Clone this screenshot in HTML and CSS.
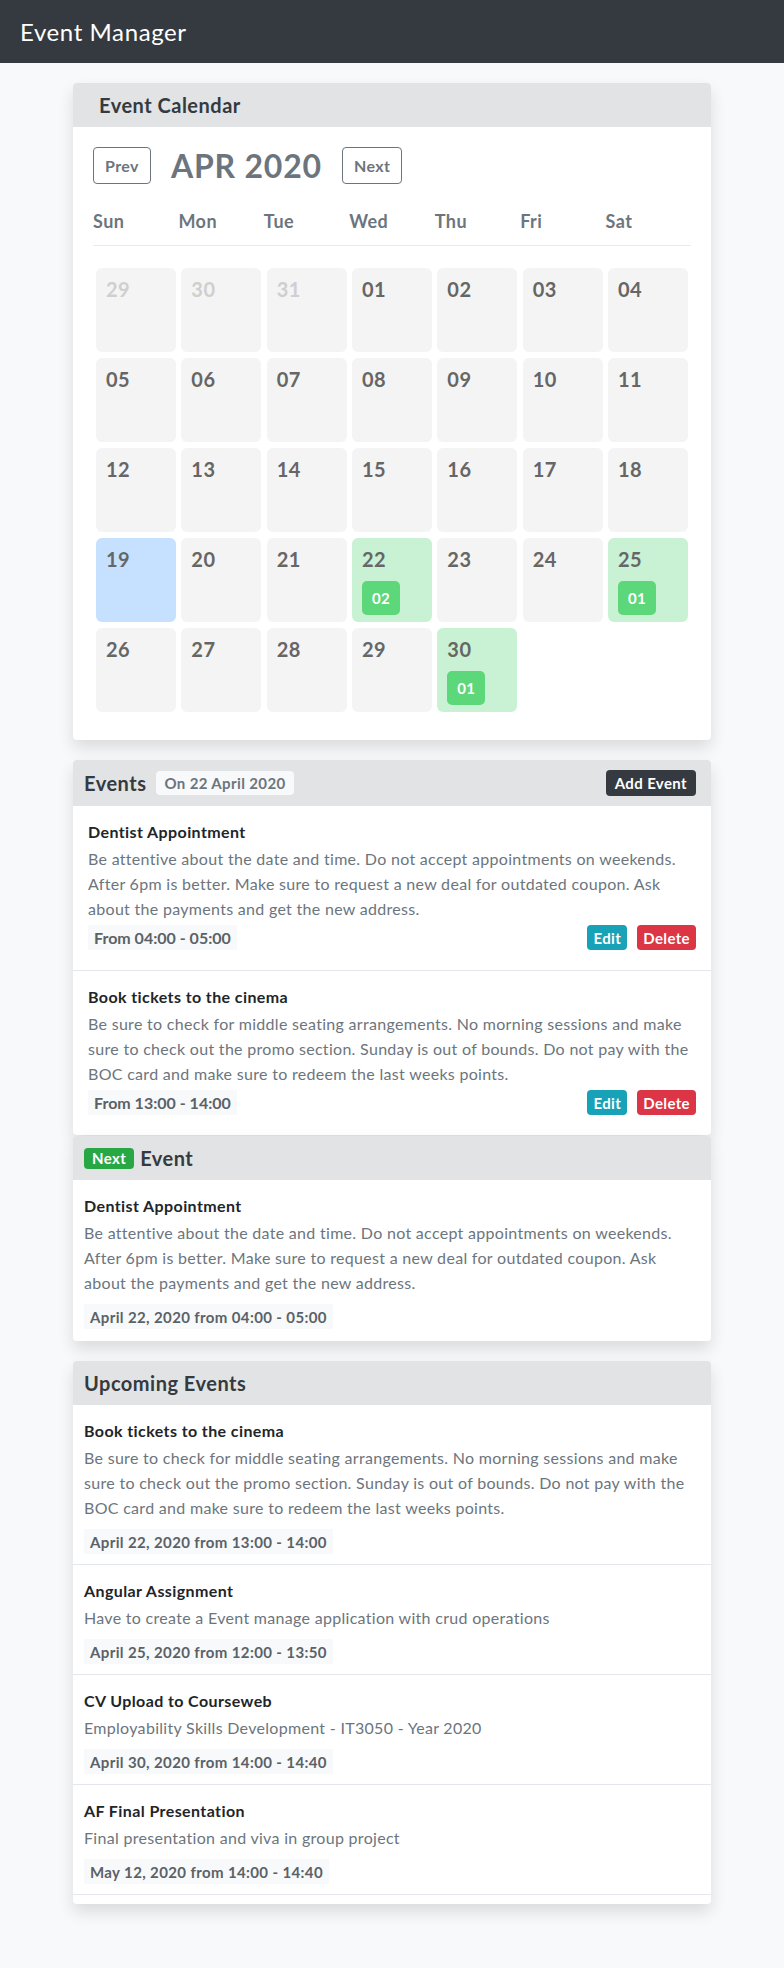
FILE: index.html
```html
<!DOCTYPE html>
<html lang="en">
<head>
<meta charset="utf-8">
<title>Event Manager</title>
<link rel="stylesheet" href="styles.css">
</head>
<body>
<nav class="navbar"><span class="brand">Event Manager</span></nav>
<main class="container">
  <section class="card cal-card">
    <div class="card-header cal-header">Event Calendar</div>
    <div class="cal-body">
      <div class="toolbar">
        <button class="btn-outline">Prev</button>
        <h2 class="month">APR 2020</h2>
        <button class="btn-outline">Next</button>
      </div>
      <div class="weekdays">
        <span>Sun</span><span>Mon</span><span>Tue</span><span>Wed</span><span>Thu</span><span>Fri</span><span>Sat</span>
      </div>
      <div class="grid">
        <div class="cell muted"><span class="num">29</span></div>
        <div class="cell muted"><span class="num">30</span></div>
        <div class="cell muted"><span class="num">31</span></div>
        <div class="cell"><span class="num">01</span></div>
        <div class="cell"><span class="num">02</span></div>
        <div class="cell"><span class="num">03</span></div>
        <div class="cell"><span class="num">04</span></div>
        <div class="cell"><span class="num">05</span></div>
        <div class="cell"><span class="num">06</span></div>
        <div class="cell"><span class="num">07</span></div>
        <div class="cell"><span class="num">08</span></div>
        <div class="cell"><span class="num">09</span></div>
        <div class="cell"><span class="num">10</span></div>
        <div class="cell"><span class="num">11</span></div>
        <div class="cell"><span class="num">12</span></div>
        <div class="cell"><span class="num">13</span></div>
        <div class="cell"><span class="num">14</span></div>
        <div class="cell"><span class="num">15</span></div>
        <div class="cell"><span class="num">16</span></div>
        <div class="cell"><span class="num">17</span></div>
        <div class="cell"><span class="num">18</span></div>
        <div class="cell today"><span class="num">19</span></div>
        <div class="cell"><span class="num">20</span></div>
        <div class="cell"><span class="num">21</span></div>
        <div class="cell has-event"><span class="num">22</span><span class="count">02</span></div>
        <div class="cell"><span class="num">23</span></div>
        <div class="cell"><span class="num">24</span></div>
        <div class="cell has-event"><span class="num">25</span><span class="count">01</span></div>
        <div class="cell"><span class="num">26</span></div>
        <div class="cell"><span class="num">27</span></div>
        <div class="cell"><span class="num">28</span></div>
        <div class="cell"><span class="num">29</span></div>
        <div class="cell has-event"><span class="num">30</span><span class="count">01</span></div>
      </div>
    </div>
  </section>

  <section class="card events-card">
    <div class="card-header events-header">
      <span class="header-title">Events</span>
      <span class="date-badge">On 22 April 2020</span>
      <button class="btn-dark">Add Event</button>
    </div>
    <ul class="list">
      <li class="event-item">
        <h4 class="ev-title">Dentist Appointment</h4>
        <p class="ev-desc">Be attentive about the date and time. Do not accept appointments on weekends. After 6pm is better. Make sure to request a new deal for outdated coupon. Ask about the payments and get the new address.</p>
        <div class="ev-footer">
          <span class="time time-from">From 04:00 - 05:00</span>
          <span class="actions"><button class="btn-edit">Edit</button><button class="btn-delete">Delete</button></span>
        </div>
      </li>
      <li class="event-item">
        <h4 class="ev-title">Book tickets to the cinema</h4>
        <p class="ev-desc">Be sure to check for middle seating arrangements. No morning sessions and make sure to check out the promo section. Sunday is out of bounds. Do not pay with the BOC card and make sure to redeem the last weeks points.</p>
        <div class="ev-footer">
          <span class="time time-from">From 13:00 - 14:00</span>
          <span class="actions"><button class="btn-edit">Edit</button><button class="btn-delete">Delete</button></span>
        </div>
      </li>
    </ul>
  </section>

  <section class="card next-card">
    <div class="card-header next-header"><span class="next-badge">Next</span><span class="header-title">Event</span></div>
    <div class="next-body">
      <h4 class="ev-title">Dentist Appointment</h4>
      <p class="ev-desc">Be attentive about the date and time. Do not accept appointments on weekends. After 6pm is better. Make sure to request a new deal for outdated coupon. Ask about the payments and get the new address.</p>
      <span class="time time-wide">April 22, 2020 from 04:00 - 05:00</span>
    </div>
  </section>

  <section class="card upcoming-card">
    <div class="card-header up-header"><span class="header-title">Upcoming Events</span></div>
    <ul class="list">
      <li class="up-item">
        <h4 class="ev-title">Book tickets to the cinema</h4>
        <p class="ev-desc">Be sure to check for middle seating arrangements. No morning sessions and make sure to check out the promo section. Sunday is out of bounds. Do not pay with the BOC card and make sure to redeem the last weeks points.</p>
        <span class="time time-wide">April 22, 2020 from 13:00 - 14:00</span>
      </li>
      <li class="up-item">
        <h4 class="ev-title">Angular Assignment</h4>
        <p class="ev-desc">Have to create a Event manage application with crud operations</p>
        <span class="time time-wide">April 25, 2020 from 12:00 - 13:50</span>
      </li>
      <li class="up-item">
        <h4 class="ev-title">CV Upload to Courseweb</h4>
        <p class="ev-desc">Employability Skills Development - IT3050 - Year 2020</p>
        <span class="time time-wide">April 30, 2020 from 14:00 - 14:40</span>
      </li>
      <li class="up-item">
        <h4 class="ev-title">AF Final Presentation</h4>
        <p class="ev-desc">Final presentation and viva in group project</p>
        <span class="time time-wide">May 12, 2020 from 14:00 - 14:40</span>
      </li>
      <li class="up-end"></li>
    </ul>
  </section>
</main>
</body>
</html>
```
FILE: styles.css
```css
* { box-sizing: border-box; letter-spacing: 0.025em; }
body {
  margin: 0;
  background: #f8f9fa;
  font-family: Lato, "Open Sans", sans-serif;
  color: #212529;
}
button { font-family: inherit; cursor: pointer; }

.navbar {
  height: 63px;
  background: #343a40;
  display: flex;
  align-items: center;
  padding-left: 20px;
}
.brand { color: #fff; font-size: 24px; }

.container {
  width: 638px;
  margin: 20px auto 60px;
}

.card {
  background: #fff;
  border-radius: 4px;
  box-shadow: 0 8px 16px rgba(0, 0, 0, 0.12);
  overflow: hidden;
}
.card + .card { margin-top: 20px; }
.card.next-card { margin-top: 1px; }

.card-header {
  background: #e2e3e5;
  height: 44px;
  display: flex;
  align-items: center;
  padding: 0 11px;
  font-size: 20px;
  font-weight: 700;
  color: #343a40;
}
.cal-header { padding-left: 26px; }

.cal-body { padding: 20px 20px 28px; }
.toolbar {
  display: flex;
  align-items: center;
  gap: 20px;
  height: 37px;
}
.btn-outline {
  height: 37px;
  padding: 0 11px;
  border: 1px solid #6c757d;
  border-radius: 4px;
  background: transparent;
  color: #6c757d;
  font-size: 16px;
  font-weight: 700;
}
.month {
  margin: 0;
  font-size: 32px;
  font-weight: 700;
  color: #6c757d;
}

.weekdays {
  margin-top: 24px;
  display: grid;
  grid-template-columns: repeat(7, 1fr);
  padding-bottom: 10px;
  border-bottom: 1px solid #e9ecef;
  font-size: 18px;
  line-height: 27px;
  font-weight: 700;
  color: #6c757d;
}

.grid {
  margin-top: 22px;
  padding: 0 3px;
  display: grid;
  grid-template-columns: repeat(7, 1fr);
  grid-auto-rows: 84px;
  column-gap: 5.3px;
  row-gap: 6px;
}
.cell {
  background: #f4f4f4;
  border-radius: 6px;
  padding: 9px 10px 0;
  display: flex;
  flex-direction: column;
  align-items: flex-start;
}
.num {
  font-size: 20px;
  line-height: 24px;
  font-weight: 700;
  color: #666;
}
.cell.muted .num { color: #cfcfcf; }
.cell.today { background: #c5e1ff; }
.cell.has-event { background: #c9f1d3; }
.count {
  margin-top: 10px;
  width: 38px;
  height: 34px;
  border-radius: 5px;
  background: #5cd77a;
  color: #fff;
  font-size: 15px;
  font-weight: 700;
  display: flex;
  align-items: center;
  justify-content: center;
}

.events-header { height: 46px; }
.header-title { font-size: 20px; font-weight: 700; color: #343a40; }
.date-badge {
  margin-left: 10px;
  height: 24px;
  padding: 0 8px;
  background: #f8f9fa;
  border-radius: 4px;
  color: #6c757d;
  font-size: 15px;
  font-weight: 700;
  display: inline-flex;
  align-items: center;
}
.btn-dark {
  margin-left: auto;
  margin-right: 4px;
  height: 26px;
  padding: 0 9px;
  border: none;
  border-radius: 4px;
  background: #343a40;
  color: #fff;
  font-size: 15px;
  font-weight: 700;
}

.list { list-style: none; margin: 0; padding: 0; }
.event-item {
  padding: 15px 15px 20px;
}
.event-item + .event-item,
.up-item + .up-item,
.up-end { border-top: 1px solid #e3e6ea; }

.ev-title {
  margin: 0 0 3px;
  font-size: 16px;
  line-height: 22px;
  font-weight: 700;
  color: #212529;
}
.ev-desc {
  margin: 0;
  font-size: 16px;
  line-height: 25px;
  letter-spacing: 0.3px;
  color: #6c757d;
}
.ev-footer {
  margin-top: 4px;
  display: flex;
  justify-content: space-between;
  align-items: center;
}
.time {
  display: inline-flex;
  align-items: center;
  height: 25px;
  padding: 0 6px;
  background: #f8f9fa;
  color: #5a6268;
  font-size: 15px;
  font-weight: 700;
}
.time-from { font-size: 16px; letter-spacing: 0; }
.actions { display: flex; gap: 10px; }
.btn-edit, .btn-delete {
  height: 25px;
  padding: 0 6px;
  border: none;
  border-radius: 4px;
  color: #fff;
  font-size: 15px;
  font-weight: 700;
}
.btn-edit { background: #17a2b8; }
.btn-delete { background: #dc3545; }

.next-header { gap: 6px; }
.next-badge {
  height: 21px;
  padding: 0 8px;
  border-radius: 4px;
  background: #28a745;
  color: #fff;
  font-size: 15px;
  font-weight: 700;
  display: inline-flex;
  align-items: center;
}
.next-body { padding: 15px 11px 12px; }
.time-wide { margin-top: 9px; padding: 0 6px; }

.up-item { padding: 15px 11px 10px; }
.up-end { height: 10px; }
```
